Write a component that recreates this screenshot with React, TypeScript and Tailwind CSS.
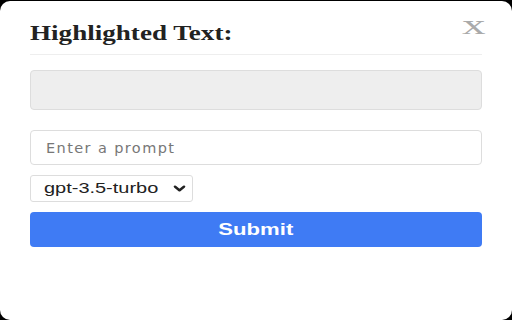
import { ChevronDown } from "lucide-react";

export default function App() {
  return (
    <div className="h-[320px] w-[512px] bg-black pt-px">
      <div className="relative h-[319px] w-full rounded-[10px] bg-white px-[30px] pt-[19px] font-['Liberation_Sans',Arial,sans-serif]">
        <button className="absolute right-[32px] top-[11px] font-['Liberation_Serif',serif] text-[27px] leading-none text-[#aaa] scale-x-[1.75]">
          x
        </button>
        <h2 className="font-['Liberation_Serif','Times_New_Roman',serif] text-[21px] font-bold leading-[26px] text-[#222]">
          <span className="inline-block origin-left scale-x-[1.29]">Highlighted Text:</span>
        </h2>
        <div className="mt-[8px] h-px w-full bg-[#eee]" />
        <div className="mt-[15px] h-[40px] w-full rounded-[4px] border border-[#ddd] bg-[#eee]" />
        <input
          className="mt-[20px] block h-[35px] w-full rounded-[4px] border border-[#ddd] px-[15px] font-['DejaVu_Sans',sans-serif] text-[14.5px] tracking-[1.4px] text-[#222] outline-none placeholder:text-[#777]"
          placeholder="Enter a prompt"
        />
        <div className="mt-[10px] flex h-[27px] w-[163px] items-center justify-between rounded-[3px] border border-[#ddd] pl-[13px] pr-[5px] text-[15px] text-[#222]">
          <span className="inline-block origin-left scale-x-[1.33]">gpt-3.5-turbo</span>
          <ChevronDown className="h-[15px] w-[15px] scale-x-[1.2] text-[#222]" strokeWidth={3.5} />
        </div>
        <button className="mt-[10px] flex h-[35px] w-full items-center justify-center rounded-[4px] bg-[#3f7bf4] text-[17px] font-bold text-white">
          <span className="inline-block scale-x-[1.3]">Submit</span>
        </button>
      </div>
    </div>
  );
}
